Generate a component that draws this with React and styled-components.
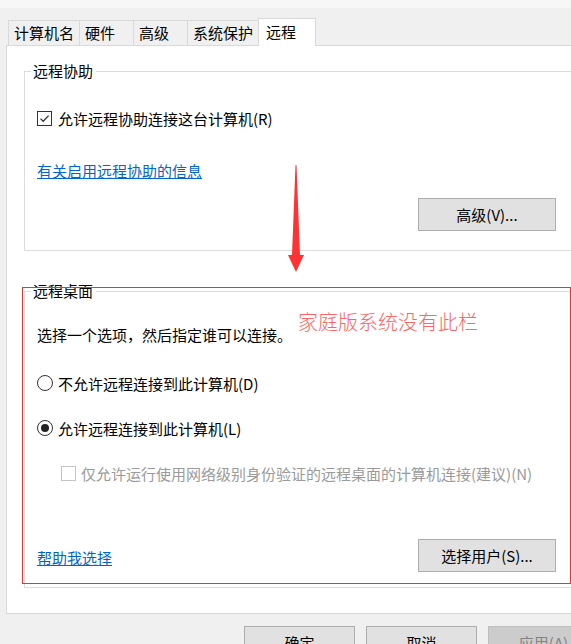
import React from 'react';
import styled, { createGlobalStyle } from 'styled-components';

const GlobalStyle = createGlobalStyle`
  html, body {
    margin: 0;
    padding: 0;
    overflow: hidden;
    background: #f0f0f0;
  }
  body {
    font-family: "Noto Sans CJK SC", "Microsoft YaHei", sans-serif;
    font-size: 15px;
    color: #000;
  }
`;

const Window = styled.div`
  width: 610px;
  height: 644px;
  background: #f0f0f0;
`;

const TopEdge = styled.div`
  height: 8px;
  background: #f7f7f7;
`;

const TabBar = styled.div`
  display: flex;
  align-items: flex-end;
  height: 28px;
  margin-top: 10px;
  margin-bottom: -1px;
  padding-left: 8px;
  position: relative;
  z-index: 1;
`;

const Tab = styled.div`
  box-sizing: border-box;
  min-width: ${p => (p.$active ? '58px' : '55px')};
  height: ${p => (p.$active ? '28px' : '25px')};
  margin-bottom: ${p => (p.$active ? '0' : '1px')};
  margin-left: -1px;
  padding: ${p => (p.$active ? '0 6px 0 7px' : '0 5px')};
  border: 1px solid #d9d9d9;
  border-bottom: none;
  background: ${p => (p.$active ? '#fff' : '#f0f0f0')};
  line-height: ${p => (p.$active ? '26px' : '24px')};
  white-space: nowrap;

  &:first-child {
    margin-left: 0;
  }
`;

const Panel = styled.div`
  position: relative;
  box-sizing: border-box;
  width: 600px;
  margin-left: 6px;
  padding: 15px 0 25px 17px;
  background: #fff;
  border: 1px solid #d9d9d9;
`;

const Group = styled.fieldset`
  box-sizing: border-box;
  width: 560px;
  min-width: 0;
  margin: 0;
  padding: 0 27px ${p => p.$bottom}px 12px;
  border: 1px solid #dcdcdc;
`;

const Legend = styled.legend`
  margin-left: -6px;
  padding: 0 3px 0 2px;
  line-height: 20px;
`;

const GroupWrap = styled.div`
  position: relative;
  margin-top: 30px;
`;

const Row = styled.label`
  display: flex;
  align-items: center;
  gap: ${p => p.$gap || 6}px;
  height: 20px;
  margin-top: ${p => p.$top}px;
  margin-left: ${p => p.$indent || 0}px;
  color: ${p => (p.$disabled ? '#9a9a9a' : '#000')};
  white-space: nowrap;
`;

const Text = styled.div`
  line-height: 20px;
  margin-top: ${p => p.$top}px;
`;

const Box = styled.span`
  position: relative;
  box-sizing: border-box;
  width: 15px;
  height: 15px;
  flex: none;
  background: #fff;
  border: 1px solid ${p => (p.$disabled ? '#c4c4c4' : '#333')};

  svg {
    position: absolute;
    left: 1px;
    top: 1px;
  }
`;

const Radio = styled.span`
  position: relative;
  box-sizing: border-box;
  width: 16px;
  height: 16px;
  flex: none;
  border-radius: 50%;
  background: #fff;
  border: 1px solid #333;

  &::after {
    content: '';
    display: ${p => (p.$checked ? 'block' : 'none')};
    position: absolute;
    left: 3px;
    top: 3px;
    width: 8px;
    height: 8px;
    border-radius: 50%;
    background: #222;
  }
`;

const Link = styled.a`
  display: block;
  width: fit-content;
  margin-top: ${p => p.$top || 0}px;
  padding-top: ${p => p.$nudge || 0}px;
  line-height: 20px;
  color: #0066cc;
  text-decoration: underline;
  cursor: pointer;
`;

const ButtonRow = styled.div`
  display: flex;
  align-items: center;
  justify-content: ${p => (p.$spread ? 'space-between' : 'flex-end')};
  margin-top: ${p => p.$top}px;
`;

const Button = styled.button`
  box-sizing: border-box;
  width: ${p => p.$width || 138}px;
  height: 33px;
  padding: 0;
  font: inherit;
  font-size: 15px;
  color: ${p => (p.disabled ? '#838383' : '#000')};
  background: ${p => (p.disabled ? '#cccccc' : '#e1e1e1')};
  border: 1px solid ${p => (p.disabled ? '#bfbfbf' : '#adadad')};
  border-radius: 0;
`;

const Footer = styled.div`
  display: flex;
  justify-content: flex-end;
  gap: 11px;
  padding: 12px 11px 0 0;
`;

// annotations drawn on top of the dialog
const RedFrame = styled.div`
  position: absolute;
  left: -2px;
  top: 6px;
  width: 549px;
  height: 297px;
  box-sizing: border-box;
  border: 1px solid #ee3333;
  pointer-events: none;
`;

const Note = styled.div`
  position: absolute;
  left: 274px;
  top: 28px;
  font-size: 20px;
  font-weight: 300;
  line-height: 26px;
  color: #ff6464;
  white-space: nowrap;
`;

const Arrow = styled.svg`
  position: absolute;
  left: 279px;
  top: 118px;
`;

const Check = () => (
  <svg width="11" height="11" viewBox="0 0 11 11">
    <path d="M1.5 5.6 L4.2 8.3 L9.6 2.6" fill="none" stroke="#333" strokeWidth="1.3" />
  </svg>
);

export default function App() {
  return (
    <>
      <GlobalStyle />
      <Window>
        <TopEdge />
        <TabBar>
          <Tab>计算机名</Tab>
          <Tab>硬件</Tab>
          <Tab>高级</Tab>
          <Tab>系统保护</Tab>
          <Tab $active>远程</Tab>
        </TabBar>
        <Panel>
          <Group $bottom={19}>
            <Legend>远程协助</Legend>
            <Row $top={27}>
              <Box><Check /></Box>
              允许远程协助连接这台计算机(R)
            </Row>
            <Link $top={33}>有关启用远程协助的信息</Link>
            <ButtonRow $top={17}>
              <Button>高级(V)...</Button>
            </ButtonRow>
          </Group>

          <GroupWrap>
            <Group $bottom={15}>
              <Legend>远程桌面</Legend>
              <Text $top={24}>选择一个选项，然后指定谁可以连接。</Text>
              <Row $top={28} $gap={5}>
                <Radio />
                不允许远程连接到此计算机(D)
              </Row>
              <Row $top={25} $gap={5}>
                <Radio $checked />
                允许远程连接到此计算机(L)
              </Row>
              <Row $top={25} $indent={24} $gap={5} $disabled>
                <Box $disabled />
                仅允许运行使用网络级别身份验证的远程桌面的计算机连接(建议)(N)
              </Row>
              <ButtonRow $top={56} $spread>
                <Link $nudge={4}>帮助我选择</Link>
                <Button>选择用户(S)...</Button>
              </ButtonRow>
            </Group>
            <RedFrame />
            <Note>家庭版系统没有此栏</Note>
          </GroupWrap>

          <Arrow width="20" height="110" viewBox="0 0 20 110">
            <polygon
              points="9.5,1 10.5,1 14,91 18,91 10,108 2,91 6,91"
              fill="#f33"
            />
          </Arrow>
        </Panel>
        <Footer>
          <Button $width={111}>确定</Button>
          <Button $width={111}>取消</Button>
          <Button $width={111} disabled>应用(A)</Button>
        </Footer>
      </Window>
    </>
  );
}
